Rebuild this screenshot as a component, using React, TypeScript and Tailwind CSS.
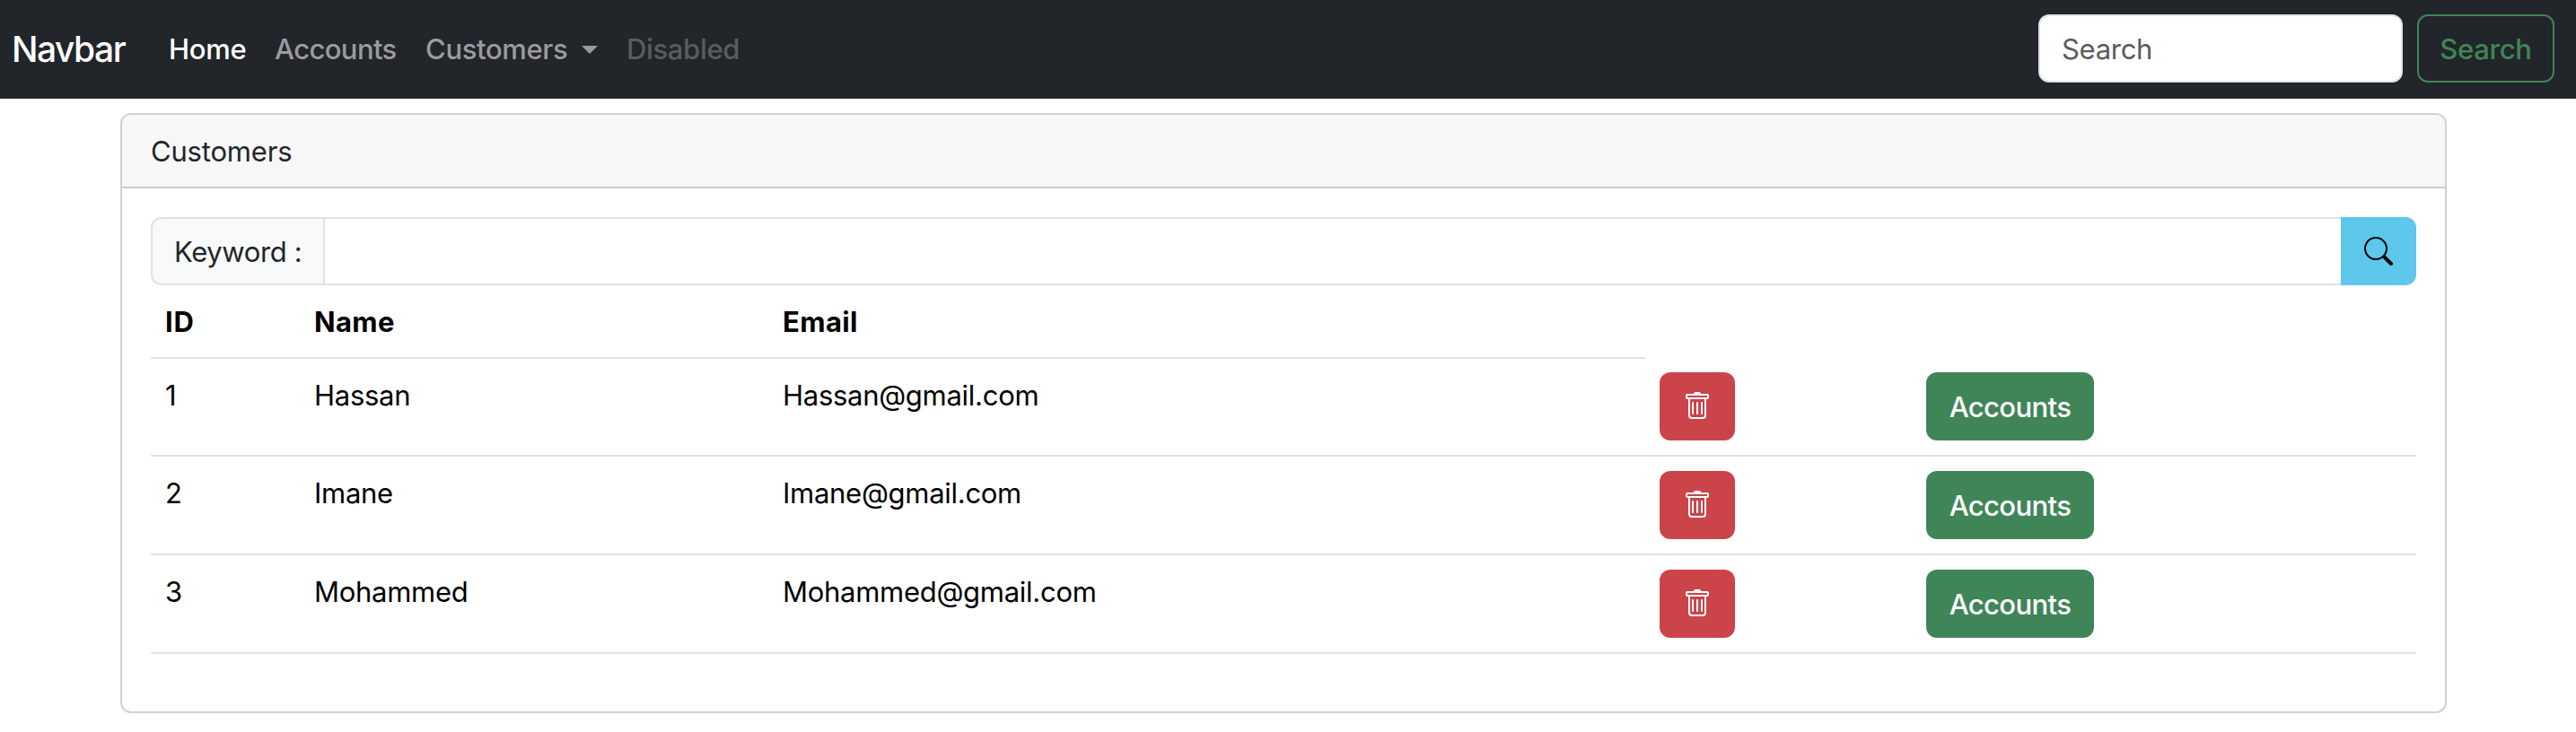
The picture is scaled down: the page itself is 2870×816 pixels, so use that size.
import { BsSearch, BsTrash } from "react-icons/bs";

interface Customer {
  id: number;
  name: string;
  email: string;
}

const customers: Customer[] = [
  { id: 1, name: "Hassan", email: "Hassan@gmail.com" },
  { id: 2, name: "Imane", email: "Imane@gmail.com" },
  { id: 3, name: "Mohammed", email: "Mohammed@gmail.com" },
];

function Navbar() {
  return (
    <nav className="flex h-[110px] items-center bg-[#222529] pr-6 pl-[13px] text-[#9b9b9d]">
      <a className="w-[175px] text-[39px] leading-[60px] font-[450] tracking-[-1.5px] text-white">
        Navbar
      </a>
      <a className="w-[118px] font-[450] tracking-[-0.3px] text-white">Home</a>
      <a className="w-[168px] font-[450] tracking-[-0.6px]">Accounts</a>
      <a className="flex w-56 items-center font-[450] tracking-[-0.36px]">
        Customers
        <svg viewBox="0 0 18 9" className="ml-[16px] h-[9px] w-[18px] fill-current">
          <path d="M0 0h18L9 9z" />
        </svg>
      </a>
      <a className="font-[450] tracking-[-0.34px] text-[#595c5f]">Disabled</a>
      <form className="mb-0.5 ml-auto flex gap-4">
        <input
          type="search"
          placeholder="Search"
          className="h-[76px] w-[406px] rounded-xl border-2 border-[#dfe2e6] bg-white px-6 tracking-[-0.3px] placeholder:text-[#595c5f] placeholder:opacity-100"
        />
        <button
          type="button"
          className="h-[76px] w-[153px] rounded-xl border-2 border-[#408558] pt-0.5 font-[450] tracking-[-0.3px] text-[#408558]"
        >
          Search
        </button>
      </form>
    </nav>
  );
}

function KeywordSearch() {
  return (
    <div className="flex h-[76px]">
      <span className="flex w-[194px] items-center rounded-l-xl border-2 border-[#dfe2e6] bg-[#f8f9fa] pt-0.5 pl-6 tracking-[-0.38px] whitespace-nowrap">
        Keyword :
      </span>
      <input type="text" className="min-w-0 flex-1 border-y-2 border-[#dfe2e6] bg-white px-6" />
      <button
        type="button"
        className="flex w-[84px] items-center justify-center rounded-r-xl bg-[#5dc7ec] text-black"
      >
        <BsSearch className="size-8" />
      </button>
    </div>
  );
}

function CustomerTable() {
  return (
    <div className="text-black">
      <div className="grid h-[82px] w-[1665px] grid-cols-[166px_522px_1fr] border-b-2 border-[#dfe2e6] pt-[17px] font-bold">
        <div className="pl-4 tracking-[0.8px]">ID</div>
        <div className="pl-4 tracking-[0.36px]">Name</div>
        <div className="pl-4 tracking-[0.4px]">Email</div>
      </div>
      {customers.map((c) => (
        <div
          key={c.id}
          className="grid h-[110px] grid-cols-[166px_522px_977px_297px_1fr] border-b-2 border-[#dfe2e6] pt-4 leading-[50px] tracking-[-0.28px] nth-2:h-[109px] nth-2:pt-[15px] nth-2:leading-[52px]"
        >
          <div className="pl-4">{c.id}</div>
          <div className="pl-4">{c.name}</div>
          <div className="pl-4">{c.email}</div>
          <div className="pl-4">
            <button
              type="button"
              className="flex h-[76px] w-[84px] items-center justify-center rounded-xl bg-[#cb444a] text-white"
            >
              <BsTrash className="size-8" />
            </button>
          </div>
          <div className="pl-4">
            <button
              type="button"
              className="block h-[76px] w-[187px] rounded-xl bg-[#408558] pt-0.5 leading-[48px] font-[450] tracking-[-0.6px] text-white"
            >
              Accounts
            </button>
          </div>
        </div>
      ))}
    </div>
  );
}

export default function App() {
  return (
    <div className="min-h-[816px] bg-white font-['Inter',sans-serif] text-[31px] leading-[48px] text-[#222529]">
      <Navbar />
      <main className="pt-4 pr-36 pl-[134px]">
        <section className="h-[669px] overflow-hidden rounded-xl border-2 border-[#d1d1d1]">
          <header className="h-[82px] border-b-2 border-[#cbcbcb] bg-[#f7f7f7] px-8 pt-[17px] tracking-[-0.18px]">
            Customers
          </header>
          <div className="px-8 pt-8">
            <KeywordSearch />
            <CustomerTable />
          </div>
        </section>
      </main>
    </div>
  );
}
